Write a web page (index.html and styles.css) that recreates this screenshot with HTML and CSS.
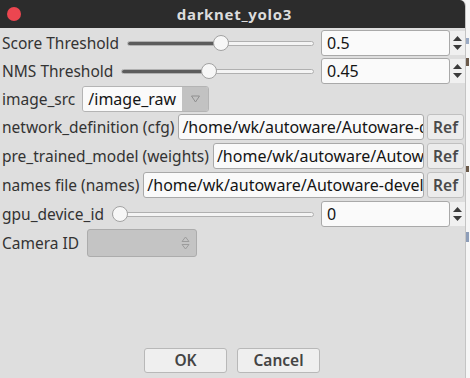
FILE: index.html
```html
<!DOCTYPE html>
<html lang="en">
<head>
  <meta charset="UTF-8">
  <title>darknet_yolo3</title>
  <link rel="stylesheet" href="styles.css">
</head>
<body>
  <div class="screen">
    <div class="dialog">
      <!-- Title bar -->
      <div class="titlebar">
        <span class="close"></span>
        <span class="title">darknet_yolo3</span>
      </div>

      <!-- Parameters -->
      <div class="form">
        <div class="row">
          <span class="label">Score Threshold</span>
          <div class="slider">
            <div class="groove"><div class="fill" style="width: 50%"></div></div>
            <div class="handle" style="left: calc((100% - 16px) * 0.5)"></div>
          </div>
          <div class="spin">
            <div class="field">0.5</div>
            <div class="arrows">
              <svg width="11" height="20" viewBox="0 0 11 20"><path d="M1 8 L5.5 3 L10 8 Z" fill="#3a3a3a"/><path d="M1 12 L5.5 17 L10 12 Z" fill="#3a3a3a"/></svg>
            </div>
          </div>
        </div>

        <div class="row">
          <span class="label">NMS Threshold</span>
          <div class="slider">
            <div class="groove"><div class="fill" style="width: 45%"></div></div>
            <div class="handle" style="left: calc((100% - 16px) * 0.45)"></div>
          </div>
          <div class="spin">
            <div class="field">0.45</div>
            <div class="arrows">
              <svg width="11" height="20" viewBox="0 0 11 20"><path d="M1 8 L5.5 3 L10 8 Z" fill="#3a3a3a"/><path d="M1 12 L5.5 17 L10 12 Z" fill="#3a3a3a"/></svg>
            </div>
          </div>
        </div>

        <div class="row">
          <span class="label">image_src</span>
          <div class="combo">
            <div class="combo-text">/image_raw</div>
            <div class="combo-btn">
              <svg width="9" height="8" viewBox="0 0 9 8"><path d="M0.5 1 L8.5 1 L4.5 7 Z" fill="none" stroke="#8f8f8f" stroke-width="1"/></svg>
            </div>
          </div>
        </div>

        <div class="row">
          <span class="label">network_definition (cfg)</span>
          <div class="field path">/home/wk/autoware/Autoware-develop</div>
          <div class="ref">Ref</div>
        </div>

        <div class="row shift">
          <span class="label">pre_trained_model (weights)</span>
          <div class="field path">/home/wk/autoware/Autoware-develop</div>
          <div class="ref">Ref</div>
        </div>

        <div class="row shift">
          <span class="label">names file (names)</span>
          <div class="field path">/home/wk/autoware/Autoware-develop</div>
          <div class="ref">Ref</div>
        </div>

        <div class="row shift">
          <span class="label">gpu_device_id</span>
          <div class="slider">
            <div class="groove"><div class="fill" style="width: 0%"></div></div>
            <div class="handle" style="left: 0"></div>
          </div>
          <div class="spin">
            <div class="field">0</div>
            <div class="arrows">
              <svg width="11" height="20" viewBox="0 0 11 20"><path d="M1 8 L5.5 3 L10 8 Z" fill="#3a3a3a"/><path d="M1 12 L5.5 17 L10 12 Z" fill="#3a3a3a"/></svg>
            </div>
          </div>
        </div>

        <div class="row tall">
          <span class="label">Camera ID</span>
          <div class="spin-disabled">
            <svg width="9" height="16" viewBox="0 0 9 16"><path d="M1 6.5 L4.5 2 L8 6.5 Z" fill="none" stroke="#9c9c9c"/><path d="M1 9.5 L4.5 14 L8 9.5 Z" fill="none" stroke="#9c9c9c"/></svg>
          </div>
        </div>
      </div>

      <!-- Dialog buttons -->
      <div class="buttons">
        <div class="btn">OK</div>
        <div class="btn">Cancel</div>
      </div>
    </div>

    <div class="edge">
      <span class="mark m1"></span>
      <span class="mark m2"></span>
      <span class="mark m3"></span>
      <span class="mark m4"></span>
    </div>
  </div>
</body>
</html>
```

FILE: styles.css
```css
/* Global */
* {
  margin: 0;
  padding: 0;
  box-sizing: border-box;
}

body {
  width: 470px;
  height: 378px;
  overflow: hidden;
  font-family: "Noto Sans", "Open Sans", sans-serif;
  font-size: 15.5px;
  color: #333;
  background: #f3f3f3;
}

.screen {
  display: flex;
  height: 378px;
}

/* Dialog window */
.dialog {
  width: 466px;
  height: 378px;
  display: flex;
  flex-direction: column;
  background: #dedede;
  border-right: 1px solid #c4c4c4;
  border-top-right-radius: 6px;
  overflow: hidden;
}

.titlebar {
  height: 28px;
  flex-shrink: 0;
  background: #2c2c2c;
  display: flex;
  align-items: center;
  justify-content: center;
  position: relative;
}

.close {
  position: absolute;
  left: 7px;
  top: 7px;
  width: 14px;
  height: 14px;
  border-radius: 50%;
  background: #ec4650;
}

.title {
  color: #dcdcdc;
  font-weight: 700;
  font-size: 15px;
  letter-spacing: 0.7px;
  margin-left: 4px;
}

/* Form rows */
.form {
  display: flex;
  flex-direction: column;
  gap: 2px;
  padding: 2px 0 0 2px;
}

.row {
  display: flex;
  align-items: center;
  height: 26px;
}

.row.shift {
  margin-top: 1px;
}

.row.tall {
  height: 28px;
}

.label {
  white-space: nowrap;
  line-height: 26px;
  margin-right: 3px;
}

/* Sliders */
.slider {
  flex: 1;
  height: 16px;
  position: relative;
  margin-left: 5px;
  margin-right: 7px;
  display: flex;
  align-items: center;
}

.groove {
  width: 100%;
  height: 5px;
  border: 1px solid #b0b0b0;
  border-radius: 3px;
  background: #f4f4f4;
  overflow: hidden;
}

.fill {
  height: 100%;
  background: #5c5c5c;
}

.handle {
  position: absolute;
  top: 0;
  width: 16px;
  height: 16px;
  border-radius: 50%;
  background: #f7f7f7;
  border: 1px solid #a2a2a2;
}

/* Spin boxes and line edits */
.spin {
  display: flex;
  align-items: center;
  height: 26px;
}

.field {
  height: 26px;
  background: #fafafa;
  border: 1px solid #a9a9a9;
  border-radius: 3px;
  padding: 0 5px;
  font-size: 16px;
  line-height: 24px;
  color: #141414;
  white-space: nowrap;
  overflow: hidden;
}

.spin .field {
  width: 129px;
}

.arrows {
  width: 15px;
  height: 24px;
  display: flex;
  align-items: center;
  justify-content: center;
  background: #f0f0f0;
}

.field.path {
  flex: 1;
  min-width: 0;
  margin-left: 1px;
  padding-left: 3px;
}

.ref {
  width: 37px;
  height: 26px;
  flex-shrink: 0;
  margin-left: 3px;
  margin-right: 1px;
  border: 1px solid #c0c0c0;
  border-radius: 3px;
  background: #ececec;
  text-align: center;
  line-height: 24px;
  font-size: 15.5px;
  font-weight: 600;
  color: #4a4a4a;
}

/* Combo box */
.combo {
  width: 127px;
  height: 26px;
  display: flex;
  margin-left: 4px;
  border: 1px solid #b4b4b4;
  border-radius: 3px;
  overflow: hidden;
}

.combo-text {
  flex: 1;
  background: #fafafa;
  padding-left: 5px;
  font-size: 16px;
  line-height: 24px;
  color: #141414;
}

.combo-btn {
  width: 26px;
  background: #c2c2c2;
  display: flex;
  align-items: center;
  justify-content: center;
}

.spin-disabled {
  width: 110px;
  height: 28px;
  margin-left: 5px;
  border: 1px solid #acacac;
  border-radius: 3px;
  background: #c4c4c4;
  display: flex;
  align-items: center;
  justify-content: flex-end;
  padding-right: 6px;
}

/* Bottom buttons */
.buttons {
  margin-top: auto;
  display: flex;
  justify-content: center;
  gap: 10px;
  padding: 0 0 5px 0;
  margin-left: -1px;
}

.btn {
  width: 83px;
  height: 25px;
  border: 1px solid #b8b8b8;
  border-radius: 3px;
  background: #efefef;
  text-align: center;
  line-height: 23px;
  font-size: 15.5px;
  font-weight: 600;
  color: #444;
}

/* Sliver of the window behind */
.edge {
  flex: 1;
  display: flex;
  flex-direction: column;
  background: #f6f6f6;
}

.mark {
  display: block;
  width: 3px;
  background: #6b5a4a;
}

.m1 { height: 6px; margin-top: 38px; background: #9aaac4; }
.m2 { height: 8px; margin-top: 14px; }
.m3 { height: 6px; margin-top: 100px; }
.m4 { height: 10px; margin-top: 60px; background: #8d9db8; }
```
